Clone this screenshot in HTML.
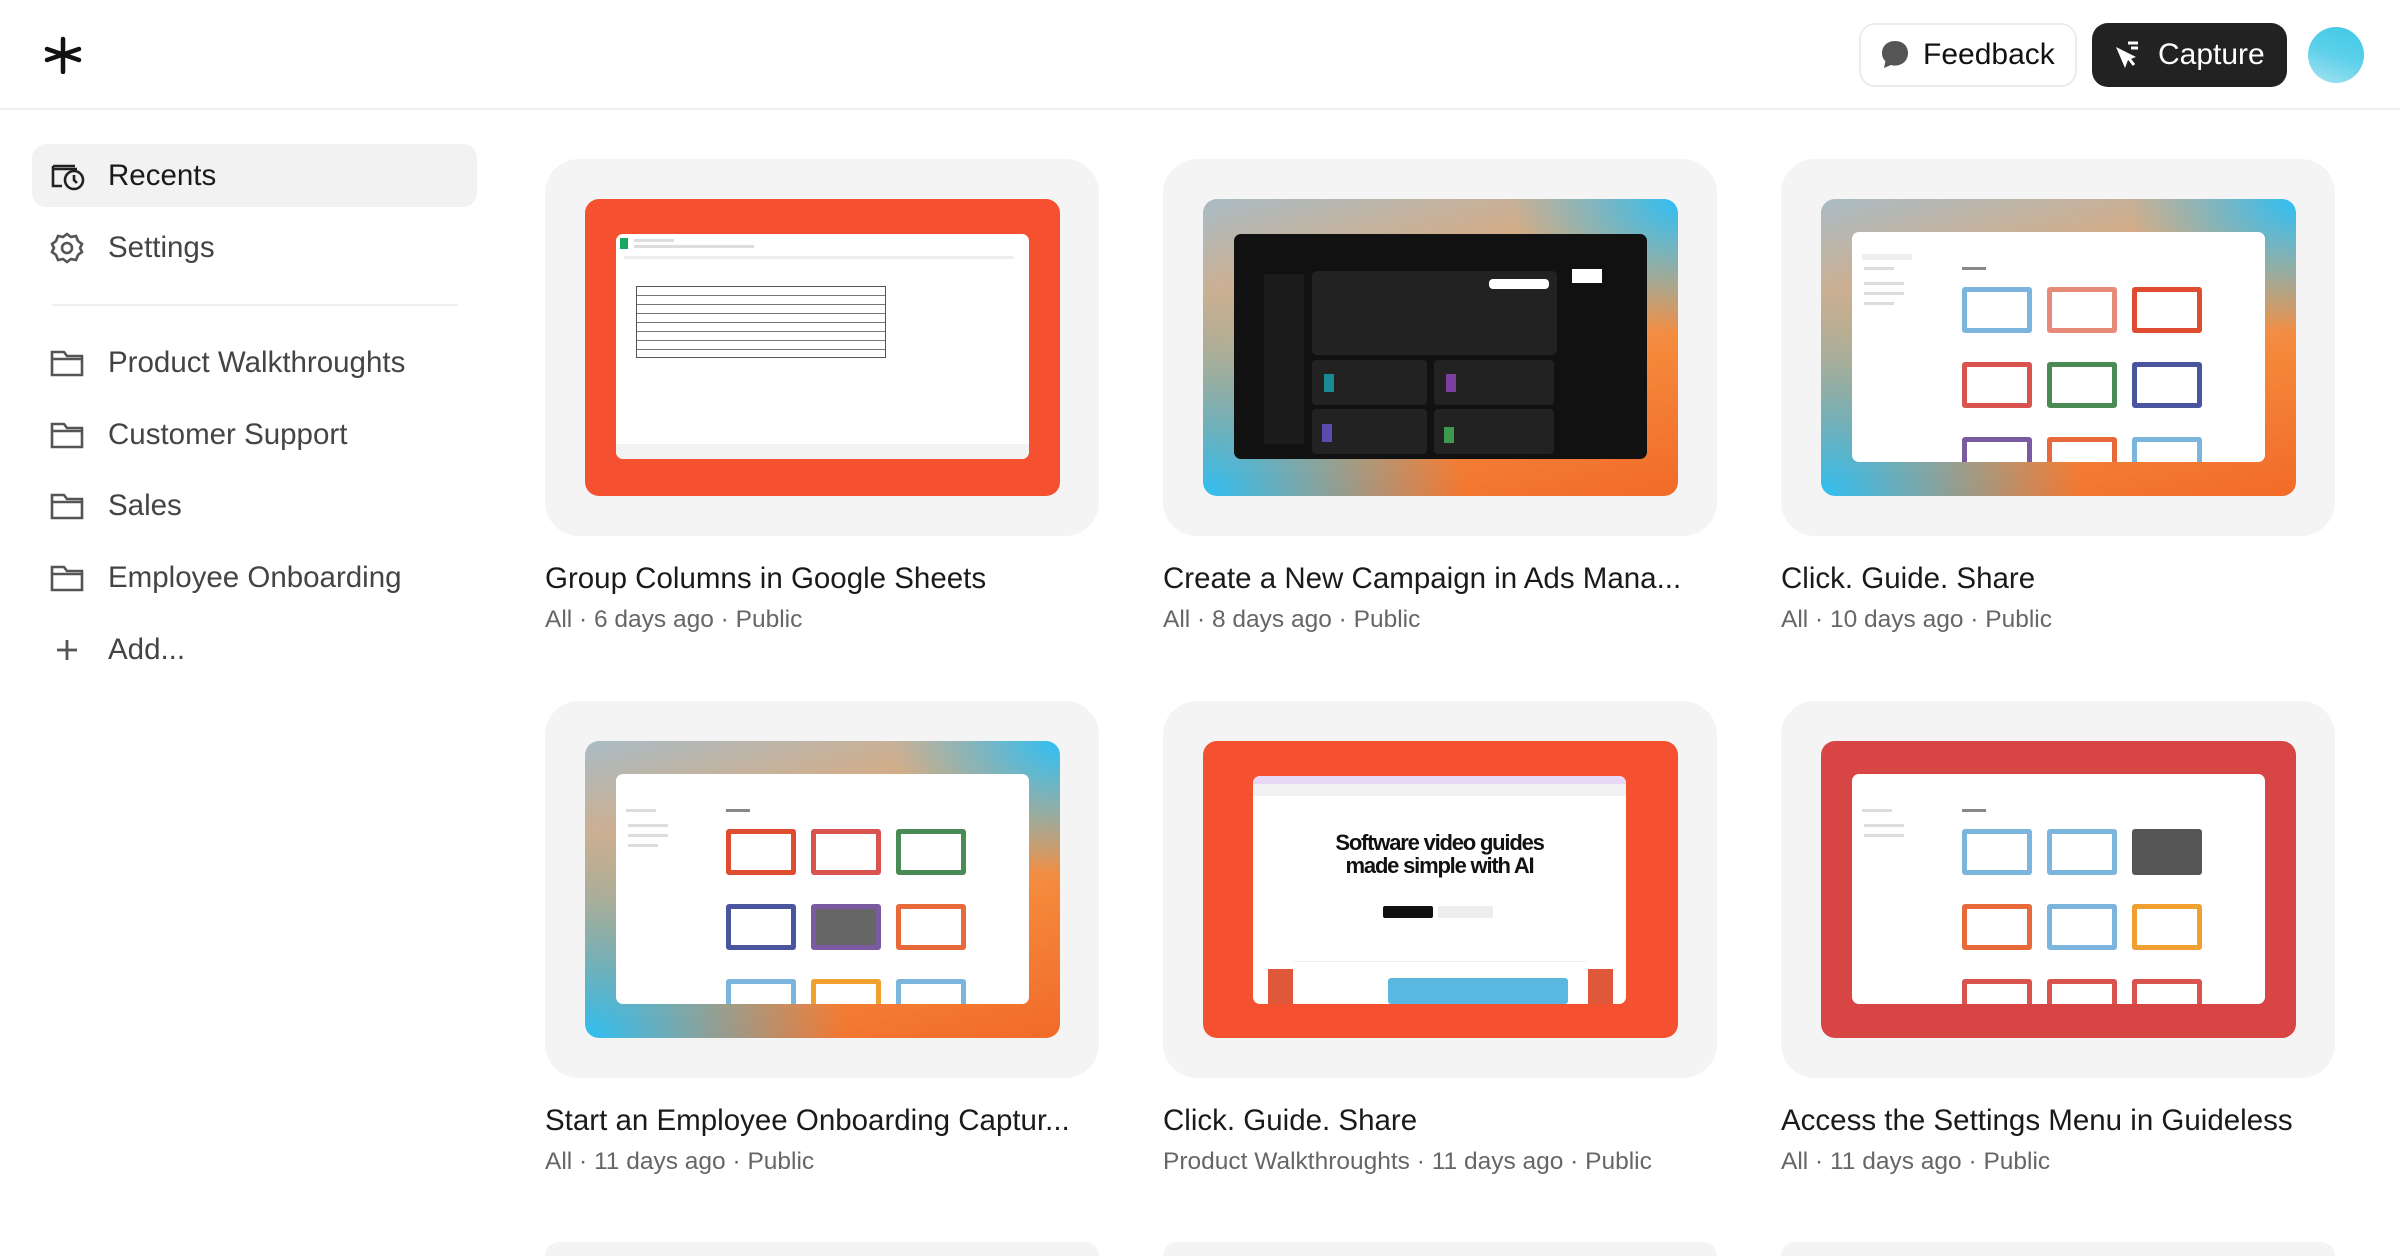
<!DOCTYPE html>
<html style="width:2400px;height:1256px;overflow:hidden"><head><meta charset="utf-8"><style>
*{margin:0;padding:0;box-sizing:border-box}
body{width:2400px;height:1256px;background:#fff;font-family:"Liberation Sans",sans-serif;position:relative;overflow:hidden;color:#1a1a1a}
.hdr{position:absolute;left:0;top:0;width:2400px;height:110px;border-bottom:2px solid #efefef}
.btn{position:absolute;top:23px;height:64px;border-radius:16px;font-size:30px;display:flex;align-items:center}
.nav{position:absolute;left:0;width:480px;height:70px;display:flex;align-items:center;font-size:29.5px;color:#444}
.nav svg{position:absolute;left:50px}
.nav span{position:absolute;left:108px}
.card{position:absolute;width:554px;height:377px;background:#f4f4f4;border-radius:34px}
.img{position:absolute;left:40px;top:40px;width:475px;height:297px;border-radius:14px;overflow:hidden}
.grad{background:radial-gradient(ellipse 55% 70% at 0% 100%,#2fbff3 0%,rgba(47,191,243,0) 100%),radial-gradient(ellipse 35% 45% at 100% 0%,#30bef3 0%,rgba(48,190,243,0) 100%),linear-gradient(165deg,#a9bcc5 0%,#e7a56a 40%,#f4883b 65%,#f26a28 100%)}
.scr{position:absolute;left:31px;top:35px;width:413px;height:225px;background:#fff;border-radius:7px;overflow:hidden}
.t{position:absolute;font-size:29.5px;color:#1a1a1a;white-space:nowrap}
.s{position:absolute;font-size:24.5px;color:#666;white-space:nowrap}
.m{position:absolute;border:5px solid;border-radius:3px;background:#fff;width:70px;height:46px}
.ln{position:absolute;height:3px;background:#ddd}
</style></head><body>
<div class="hdr">
<svg style="position:absolute;left:44px;top:36px" width="38" height="38" viewBox="0 0 38 38"><g stroke="#111" stroke-width="4.5" stroke-linecap="round"><line x1="19" y1="3" x2="19" y2="36"/><line x1="3" y1="13" x2="35" y2="24"/><line x1="35" y1="13" x2="3" y2="24"/></g></svg>
<div class="btn" style="left:1859px;width:218px;border:2px solid #ececec;color:#111"><svg style="margin-left:18px" width="32" height="32" viewBox="0 0 32 32"><path d="M16 2C8 2 3 7.5 3 14c0 3.5 1.3 6.2 3.4 8.2L5 29l7-3c1.3.4 2.6.6 4 .6 8 0 13-5.6 13-12.6S24 2 16 2z" fill="#555"/></svg><span style="margin-left:12px">Feedback</span></div>
<div class="btn" style="left:2092px;width:195px;background:#222;color:#fff"><svg style="margin-left:20px" width="32" height="32" viewBox="0 0 32 32"><path d="M4 8l9 21 3-8 8-3z" fill="#fff"/><path d="M15 17l7 9" stroke="#fff" stroke-width="3"/><path d="M16 4h10M19 9h7" stroke="#fff" stroke-width="3"/></svg><span style="margin-left:14px">Capture</span></div>
<div style="position:absolute;left:2308px;top:27px;width:56px;height:56px;border-radius:50%;background:linear-gradient(200deg,#3ec9e6 0%,#5dd0ea 50%,#a8e2f0 100%)"></div>
</div>

<div style="position:absolute;left:32px;top:144px;width:445px;height:63px;background:#f2f2f2;border-radius:14px"></div>
<div class="nav" style="top:141px;color:#1a1a1a"><svg width="36" height="30" viewBox="0 0 36 30" fill="none" stroke="#222" stroke-width="2.6"><path d="M3 8h24M3 5v20h9M3 5h22"/><circle cx="24" cy="19" r="9"/><path d="M24 14v5l3 3"/></svg><span>Recents</span></div>
<div class="nav" style="top:213px"><svg width="34" height="34" viewBox="0 0 34 34" fill="none" stroke="#555" stroke-width="2.6"><path d="M17 3l4 3 5-1 2 5 4 3-2 4 2 4-4 3-2 5-5-1-4 3-4-3-5 1-2-5-4-3 2-4-2-4 4-3 2-5 5 1z"/><circle cx="17" cy="17" r="5"/></svg><span>Settings</span></div>
<div style="position:absolute;left:52px;top:304px;width:406px;height:2px;background:#efefef"></div>
<div class="nav" style="top:328px"><svg width="34" height="30" viewBox="0 0 34 30" fill="none" stroke="#555" stroke-width="2.6"><path d="M2 4h12l3 4h15v19H2z M2 11h30"/></svg><span>Product Walkthroughts</span></div>
<div class="nav" style="top:400px"><svg width="34" height="30" viewBox="0 0 34 30" fill="none" stroke="#555" stroke-width="2.6"><path d="M2 4h12l3 4h15v19H2z M2 11h30"/></svg><span>Customer Support</span></div>
<div class="nav" style="top:471px"><svg width="34" height="30" viewBox="0 0 34 30" fill="none" stroke="#555" stroke-width="2.6"><path d="M2 4h12l3 4h15v19H2z M2 11h30"/></svg><span>Sales</span></div>
<div class="nav" style="top:543px"><svg width="34" height="30" viewBox="0 0 34 30" fill="none" stroke="#555" stroke-width="2.6"><path d="M2 4h12l3 4h15v19H2z M2 11h30"/></svg><span>Employee Onboarding</span></div>
<div class="nav" style="top:615px"><svg style="left:56px" width="22" height="22" viewBox="0 0 22 22" stroke="#555" stroke-width="2.8"><path d="M11 1v20M1 11h20"/></svg><span>Add...</span></div>

<div class="card" style="left:545px;top:159px"><div class="img" style="background:#f5502f"><div class="scr">
<div style="position:absolute;left:4px;top:4px;width:8px;height:11px;background:#1aa760"></div>
<div class="ln" style="left:18px;top:5px;width:40px"></div><div class="ln" style="left:18px;top:11px;width:120px"></div>
<div class="ln" style="left:8px;top:22px;width:390px;background:#eee"></div>
<div style="position:absolute;left:20px;top:52px;width:250px;height:72px;border:1px solid #555;background:repeating-linear-gradient(#fff 0 8px,#777 8px 9px)"></div>
<div style="position:absolute;left:0;top:210px;width:413px;height:15px;background:#f3f3f3"></div>
</div></div></div>
<div class="t" style="left:545px;top:562px">Group Columns in Google Sheets</div>
<div class="s" style="left:545px;top:606px">All · 6 days ago · Public</div>

<div class="card" style="left:1163px;top:159px"><div class="img grad"><div class="scr" style="background:#111">
<div style="position:absolute;left:30px;top:40px;width:40px;height:170px;background:#1b1b1b"></div>
<div style="position:absolute;left:78px;top:37px;width:245px;height:84px;background:#222;border-radius:5px"></div>
<div style="position:absolute;left:78px;top:126px;width:115px;height:45px;background:#222;border-radius:4px"></div>
<div style="position:absolute;left:200px;top:126px;width:120px;height:45px;background:#222;border-radius:4px"></div>
<div style="position:absolute;left:78px;top:175px;width:115px;height:45px;background:#222;border-radius:4px"></div>
<div style="position:absolute;left:200px;top:175px;width:120px;height:45px;background:#222;border-radius:4px"></div>
<div style="position:absolute;left:90px;top:140px;width:10px;height:18px;background:#1a8b95"></div>
<div style="position:absolute;left:212px;top:140px;width:10px;height:18px;background:#7a3fa0"></div>
<div style="position:absolute;left:88px;top:190px;width:10px;height:18px;background:#5a4bb0"></div>
<div style="position:absolute;left:210px;top:193px;width:10px;height:16px;background:#3d9a4c"></div>
<div style="position:absolute;left:255px;top:45px;width:60px;height:10px;background:#fff;border-radius:4px"></div>
<div style="position:absolute;left:338px;top:35px;width:30px;height:14px;background:#fff"></div>
</div></div></div>
<div class="t" style="left:1163px;top:562px">Create a New Campaign in Ads Mana...</div>
<div class="s" style="left:1163px;top:606px">All · 8 days ago · Public</div>

<div class="card" style="left:1781px;top:159px"><div class="img grad"><div class="scr" style="top:33px;height:230px">
<div class="ln" style="left:10px;top:22px;width:50px;height:6px;background:#eee"></div>
<div class="ln" style="left:12px;top:35px;width:30px"></div><div class="ln" style="left:12px;top:50px;width:40px"></div><div class="ln" style="left:12px;top:60px;width:40px"></div><div class="ln" style="left:12px;top:70px;width:30px"></div>
<div class="ln" style="left:110px;top:35px;width:24px;background:#888"></div>
<div class="m" style="left:110px;top:55px;border-color:#7bb5dd"></div>
<div class="m" style="left:195px;top:55px;border-color:#e88a7a"></div>
<div class="m" style="left:280px;top:55px;border-color:#e04c30"></div>
<div class="m" style="left:110px;top:130px;border-color:#d9534f"></div>
<div class="m" style="left:195px;top:130px;border-color:#4a8a55"></div>
<div class="m" style="left:280px;top:130px;border-color:#4a55a0"></div>
<div class="m" style="left:110px;top:205px;border-color:#7a5aa0"></div>
<div class="m" style="left:195px;top:205px;border-color:#e86a3a"></div>
<div class="m" style="left:280px;top:205px;border-color:#7bb5dd"></div>
</div></div></div>
<div class="t" style="left:1781px;top:562px">Click. Guide. Share</div>
<div class="s" style="left:1781px;top:606px">All · 10 days ago · Public</div>

<div class="card" style="left:545px;top:701px"><div class="img grad"><div class="scr" style="top:33px;height:230px">
<div class="ln" style="left:10px;top:35px;width:30px"></div><div class="ln" style="left:12px;top:50px;width:40px"></div><div class="ln" style="left:12px;top:60px;width:40px"></div><div class="ln" style="left:12px;top:70px;width:30px"></div>
<div class="ln" style="left:110px;top:35px;width:24px;background:#888"></div>
<div class="m" style="left:110px;top:55px;border-color:#e04c30"></div>
<div class="m" style="left:195px;top:55px;border-color:#d9534f"></div>
<div class="m" style="left:280px;top:55px;border-color:#4a8a55"></div>
<div class="m" style="left:110px;top:130px;border-color:#4a55a0"></div>
<div class="m" style="left:195px;top:130px;border-color:#7a5aa0;background:#666"></div>
<div class="m" style="left:280px;top:130px;border-color:#e86a3a"></div>
<div class="m" style="left:110px;top:205px;border-color:#7bb5dd"></div>
<div class="m" style="left:195px;top:205px;border-color:#f0a030"></div>
<div class="m" style="left:280px;top:205px;border-color:#7bb5dd"></div>
</div></div></div>
<div class="t" style="left:545px;top:1104px">Start an Employee Onboarding Captur...</div>
<div class="s" style="left:545px;top:1148px">All · 11 days ago · Public</div>

<div class="card" style="left:1163px;top:701px"><div class="img" style="background:#f5502f"><div class="scr" style="left:50px;width:373px;height:228px">
<div style="position:absolute;left:0;top:0;width:373px;height:8px;background:#e8d8f5"></div>
<div style="position:absolute;left:0;top:8px;width:373px;height:12px;background:#f2f2f2"></div>
<div style="position:absolute;left:0;top:55px;width:373px;text-align:center;font-weight:bold;font-size:22px;line-height:23px;letter-spacing:-1.2px;color:#111">Software video guides<br>made simple with AI</div>
<div style="position:absolute;left:130px;top:130px;width:50px;height:12px;background:#111;border-radius:2px"></div>
<div style="position:absolute;left:185px;top:130px;width:55px;height:12px;background:#eee;border-radius:2px"></div>
<div style="position:absolute;left:40px;top:185px;width:293px;height:43px;border-top:1px solid #eee"></div>
<div style="position:absolute;left:135px;top:202px;width:180px;height:26px;background:#5ab8e0;border-radius:3px"></div>
</div>
<div style="position:absolute;left:65px;top:228px;width:25px;height:35px;background:#e0583a"></div>
<div style="position:absolute;left:385px;top:228px;width:25px;height:35px;background:#e0583a"></div>
</div></div>
<div class="t" style="left:1163px;top:1104px">Click. Guide. Share</div>
<div class="s" style="left:1163px;top:1148px">Product Walkthroughts · 11 days ago · Public</div>

<div class="card" style="left:1781px;top:701px"><div class="img" style="background:#d84545"><div class="scr" style="top:33px;height:230px">
<div class="ln" style="left:10px;top:35px;width:30px"></div><div class="ln" style="left:12px;top:50px;width:40px"></div><div class="ln" style="left:12px;top:60px;width:40px"></div>
<div class="ln" style="left:110px;top:35px;width:24px;background:#888"></div>
<div class="m" style="left:110px;top:55px;border-color:#7bb5dd"></div>
<div class="m" style="left:195px;top:55px;border-color:#7bb5dd"></div>
<div class="m" style="left:280px;top:55px;border-color:#555;background:#555"></div>
<div class="m" style="left:110px;top:130px;border-color:#e86a3a"></div>
<div class="m" style="left:195px;top:130px;border-color:#7bb5dd"></div>
<div class="m" style="left:280px;top:130px;border-color:#f0a030"></div>
<div class="m" style="left:110px;top:205px;border-color:#d9534f"></div>
<div class="m" style="left:195px;top:205px;border-color:#d9534f"></div>
<div class="m" style="left:280px;top:205px;border-color:#d9534f"></div>
</div></div></div>
<div class="t" style="left:1781px;top:1104px">Access the Settings Menu in Guideless</div>
<div class="s" style="left:1781px;top:1148px">All · 11 days ago · Public</div>

<div class="card" style="left:545px;top:1242px;height:14px;border-radius:34px 34px 0 0"></div>
<div class="card" style="left:1163px;top:1242px;height:14px;border-radius:34px 34px 0 0"></div>
<div class="card" style="left:1781px;top:1242px;height:14px;border-radius:34px 34px 0 0"></div>
</body></html>
